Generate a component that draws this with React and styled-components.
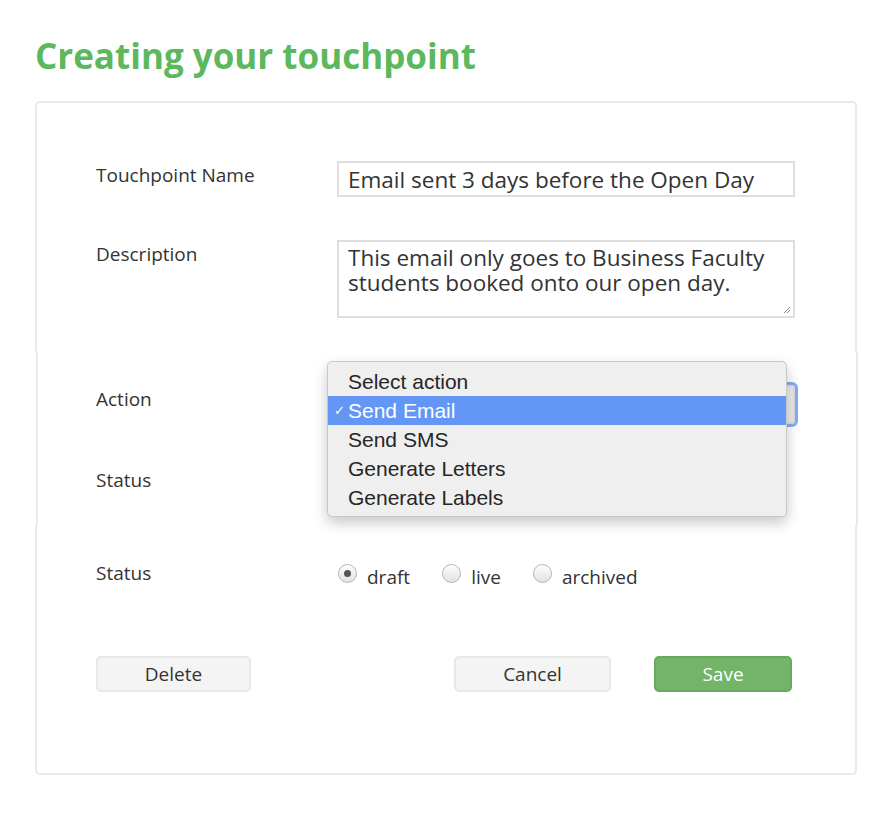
import React from "react";
import styled, { createGlobalStyle } from "styled-components";

const Global = createGlobalStyle`
  html, body { margin: 0; padding: 0; background: #fff; }
  body { font-family: "Open Sans", "Noto Sans", sans-serif; color: #333; }
  * { box-sizing: border-box; }
`;

const Page = styled.div`
  padding: 33px 30px 43px 35px;
  width: 887px;
`;

const Title = styled.h1`
  margin: 0 0 22px 0;
  font-family: "Open Sans", sans-serif;
  font-weight: 700;
  font-size: 35px;
  line-height: 46px;
  color: #5cb85c;
`;

const Card = styled.div`
  width: 822px;
  display: flex;
  flex-direction: column;
`;

const Section = styled.div`
  border-left: 2px solid #e9e9e9;
  border-right: 2px solid #e9e9e9;
  border-top: ${(p) => (p.$first ? "2px solid #e9e9e9" : "none")};
  border-bottom: ${(p) => (p.$last ? "2px solid #e9e9e9" : "none")};
  border-radius: ${(p) => (p.$first ? "5px 5px 0 0" : p.$last ? "0 0 5px 5px" : "0")};
  margin-left: ${(p) => (p.$shift ? "1px" : "0")};
  margin-right: ${(p) => (p.$shift ? "-1px" : "0")};
  padding: ${(p) => p.$pad};
  display: flex;
  flex-direction: column;
`;

const Row = styled.div`
  display: grid;
  grid-template-columns: 241px 458px;
  align-items: start;
  margin-left: ${(p) => (p.$shift ? 58 : 59)}px;
  margin-bottom: ${(p) => p.$gap || 0}px;
`;

const Label = styled.div`
  font-size: 19px;
  line-height: 24px;
  padding-top: ${(p) => p.$top || 0}px;
  color: #333;
`;

const Field = styled.div`
  position: relative;
  min-height: 39px;
`;

const TextInput = styled.div`
  height: 36px;
  border: 2px solid #dedede;
  padding: 0 9px;
  font-size: 22.5px;
  line-height: 33px;
  color: #333;
  white-space: nowrap;
`;

const TextArea = styled.div`
  position: relative;
  height: 78px;
  border: 2px solid #dedede;
  padding: 3px 9px;
  font-size: 22.5px;
  line-height: 25px;
  color: #333;
`;

const Grip = styled.svg`
  position: absolute;
  right: 2px;
  bottom: 2px;
`;

const SelectBox = styled.div`
  height: 39px;
  margin-left: 1px;
  border: 2px solid #dcdcdc;
  border-radius: 3px;
  background: #ebebeb;
  box-shadow: 0 0 0 3px rgba(90, 145, 240, 0.75);
`;

const Menu = styled.div`
  position: absolute;
  left: -10px;
  top: -24px;
  width: 460px;
  padding: 5px 0 4px;
  background: #efefef;
  border: 1px solid #c8c8c8;
  border-radius: 5px;
  box-shadow: 0 6px 14px rgba(0, 0, 0, 0.22);
  z-index: 5;
  font-family: "Liberation Sans", Arial, sans-serif;
`;

const MenuItem = styled.div`
  position: relative;
  height: 29px;
  line-height: 29px;
  padding-left: 20px;
  font-size: 21px;
  color: ${(p) => (p.$active ? "#fff" : "#262626")};
  background: ${(p) => (p.$active ? "#6497f5" : "transparent")};
`;

const Check = styled.span`
  position: absolute;
  left: 6px;
  font-size: 13px;
`;

const Radios = styled.div`
  display: flex;
  align-items: center;
  height: 24px;
  padding-left: 1px;
`;

const RadioLabel = styled.label`
  display: flex;
  align-items: center;
  margin-right: 32px;
  font-size: 19px;
  color: #333;
`;

const RadioText = styled.span`
  padding-top: 7px;
`;

const RadioDot = styled.span`
  width: 19px;
  height: 19px;
  border-radius: 50%;
  border: 1px solid #b4b4b4;
  background: linear-gradient(#fdfdfd, #e2e2e2);
  box-shadow: inset 0 1px 1px rgba(255,255,255,0.8);
  margin-right: 10px;
  display: flex;
  align-items: center;
  justify-content: center;
  &::after {
    content: "";
    width: 7px;
    height: 7px;
    border-radius: 50%;
    background: ${(p) => (p.$checked ? "#555" : "transparent")};
  }
`;

const Buttons = styled.div`
  display: flex;
  align-items: center;
  margin-left: 59px;
  width: 696px;
`;

const Spacer = styled.div`
  flex: 1;
`;

const Button = styled.button`
  height: 36px;
  width: ${(p) => p.$w}px;
  margin-left: ${(p) => p.$ml || 0}px;
  border-radius: 5px;
  font-family: "Open Sans", sans-serif;
  font-size: 19px;
  line-height: 32px;
  padding: 0;
  border: 2px solid ${(p) => (p.$primary ? "#67aa5e" : "#e8e8e8")};
  background: ${(p) => (p.$primary ? "#73b468" : "#f4f4f4")};
  color: ${(p) => (p.$primary ? "#fff" : "#333")};
`;

const actions = ["Select action", "Send Email", "Send SMS", "Generate Letters", "Generate Labels"];
const statuses = ["draft", "live", "archived"];

export default function App() {
  return (
    <Page>
      <Global />
      <Title>Creating your touchpoint</Title>
      <Card>
        <Section $first $pad="58px 0 33px">
          <Row $gap={43}>
            <Label $top={2}>Touchpoint Name</Label>
            <TextInput>Email sent 3 days before the Open Day</TextInput>
          </Row>
          <Row>
            <Label $top={2}>Description</Label>
            <TextArea>
              This email only goes to Business Faculty students booked onto our open day.
              <Grip width="9" height="9" viewBox="0 0 9 9">
                <path d="M8 2 L2 8 M8 5 L5 8" stroke="#888" strokeWidth="1" />
              </Grip>
            </TextArea>
          </Row>
        </Section>
        <Section $shift $pad="34px 0 0">
          <Row $shift $gap={42}>
            <Label $top={2}>Action</Label>
            <Field>
              <SelectBox />
              <Menu>
                {actions.map((a, i) => (
                  <MenuItem key={a} $active={i === 1}>
                    {i === 1 && <Check>✓</Check>}
                    {a}
                  </MenuItem>
                ))}
              </Menu>
            </Field>
          </Row>
          <Row $shift $gap={20}>
            <Label $top={2}>Status</Label>
            <Field />
          </Row>
        </Section>
        <Section $last $pad="36px 0 81px">
          <Row $gap={71}>
            <Label>Status</Label>
            <Radios>
              {statuses.map((s, i) => (
                <RadioLabel key={s}>
                  <RadioDot $checked={i === 0} />
                  <RadioText>{s}</RadioText>
                </RadioLabel>
              ))}
            </Radios>
          </Row>
          <Buttons>
            <Button $w={155}>Delete</Button>
            <Spacer />
            <Button $w={157}>Cancel</Button>
            <Button $w={138} $ml={43} $primary>Save</Button>
          </Buttons>
        </Section>
      </Card>
    </Page>
  );
}
